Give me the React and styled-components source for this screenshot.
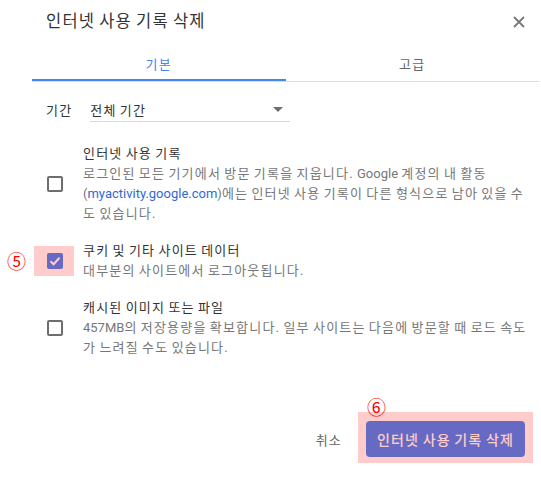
import React from "react";
import styled, { createGlobalStyle } from "styled-components";

// Hangul in Noto Sans CJK is 0.92em wide; the reference font is about a full em,
// so widen the letters and take it back off the spaces.
const Global = createGlobalStyle`
  html, body {
    margin: 0;
    padding: 0;
    background: #fff;
  }
  body {
    font-family: Roboto, "Noto Sans CJK KR", sans-serif;
    color: #333;
    letter-spacing: 0.075em;
    word-spacing: -0.075em;
  }
  button {
    letter-spacing: inherit;
    word-spacing: inherit;
  }
`;

const Latin = styled.span`
  letter-spacing: 0;
  word-spacing: 0;
`;

const Dialog = styled.div`
  width: 541px;
  height: 484px;
  box-sizing: border-box;
  display: flex;
  flex-direction: column;
`;

const Header = styled.div`
  display: flex;
  align-items: center;
  justify-content: space-between;
  padding: 10px 16px 0 46px;
  height: 24px;
`;

const Title = styled.h1`
  margin: 0;
  font-size: 16.5px;
  font-weight: 400;
  line-height: 24px;
  color: #333;
`;

const Close = styled.button`
  border: 0;
  background: none;
  padding: 0;
  width: 12px;
  height: 12px;
  display: flex;
  cursor: pointer;
`;

const Tabs = styled.div`
  display: flex;
  margin: 12px 2px 0 32px;
  border-bottom: 1px solid #dedede;
`;

const Tab = styled.div`
  flex: 1;
  height: 35px;
  display: flex;
  align-items: center;
  justify-content: center;
  font-size: 13px;
  color: ${(p) => (p.$active ? "#4285f4" : "#666")};
  box-shadow: ${(p) => (p.$active ? "inset 0 -2px 0 #4285f4" : "none")};
`;

const PeriodRow = styled.div`
  display: flex;
  align-items: center;
  margin: 15px 0 0 46px;
  gap: 18px;
  font-size: 13px;
`;

const Label = styled.span`
  color: #333;
`;

const Select = styled.div`
  width: 200px;
  height: 25px;
  border-bottom: 1px solid #dadada;
  display: flex;
  align-items: center;
  justify-content: space-between;
  padding-right: 7px;
  box-sizing: border-box;
  color: #333;
`;

const Arrow = styled.span`
  width: 0;
  height: 0;
  border-left: 5px solid transparent;
  border-right: 5px solid transparent;
  border-top: 5px solid #6e6e6e;
`;

const List = styled.div`
  display: flex;
  flex-direction: column;
  gap: 17px;
  margin-top: 22px;
`;

const Item = styled.div`
  display: flex;
  align-items: center;
  padding-left: 47px;
`;

const BoxWrap = styled.div`
  position: relative;
  width: 16px;
  height: 16px;
  flex: none;
`;

const Box = styled.div`
  width: 16px;
  height: 16px;
  box-sizing: border-box;
  border-radius: 2px;
  border: ${(p) => (p.$checked ? "none" : "2px solid #6e6e6e")};
  background: ${(p) => (p.$checked ? "#4285f4" : "transparent")};
  display: flex;
  align-items: center;
  justify-content: center;
`;

const Text = styled.div`
  margin-left: 20px;
  width: 447px;
  font-size: 13px;
  line-height: 20px;
`;

const ItemTitle = styled.div`
  color: #333;
`;

const Desc = styled.div`
  color: #777;
`;

const Link = styled.a`
  color: #3367d6;
  text-decoration: none;
`;

const Footer = styled.div`
  display: flex;
  align-items: center;
  justify-content: flex-end;
  gap: 24px;
  margin-top: 63px;
  padding-right: 16px;
`;

const Cancel = styled.button`
  border: 0;
  background: none;
  padding: 0;
  font-family: inherit;
  font-size: 13px;
  color: #666;
`;

const ButtonWrap = styled.div`
  position: relative;
`;

const Primary = styled.button`
  border: 0;
  border-radius: 4px;
  background: #4285f4;
  color: #fff;
  font-family: inherit;
  font-size: 14px;
  font-weight: 500;
  height: 36px;
  width: 159px;
  padding: 0;
`;

const Highlight = styled.div`
  position: absolute;
  left: ${(p) => p.$x}px;
  top: ${(p) => p.$y}px;
  width: ${(p) => p.$w}px;
  height: ${(p) => p.$h}px;
  background: rgba(255, 0, 0, 0.2);
  pointer-events: none;
`;

const Marker = styled.span`
  position: absolute;
  left: ${(p) => p.$x}px;
  top: ${(p) => p.$y}px;
  font-family: "Noto Sans CJK KR", sans-serif;
  font-size: 19px;
  line-height: 20px;
  letter-spacing: 0;
  color: #f00;
`;

function Check() {
  return (
    <svg width="12" height="10" viewBox="0 0 12 10">
      <path d="M1.5 5.2 L4.6 8.2 L10.5 1.8" fill="none" stroke="#fff" strokeWidth="2" />
    </svg>
  );
}

function CheckBox({ checked, mark }) {
  return (
    <BoxWrap>
      <Box $checked={checked}>{checked && <Check />}</Box>
      {mark && (
        <>
          <Highlight $x={-13} $y={-7} $w={40} $h={30} />
          <Marker $x={-40} $y={-2}>{mark}</Marker>
        </>
      )}
    </BoxWrap>
  );
}

export default function App() {
  return (
    <Dialog>
      <Global />
      <Header>
        <Title>인터넷 사용 기록 삭제</Title>
        <Close aria-label="닫기">
          <svg width="12" height="12" viewBox="0 0 12 12">
            <path d="M1 1 L11 11 M11 1 L1 11" stroke="#777" strokeWidth="1.8" />
          </svg>
        </Close>
      </Header>
      <Tabs>
        <Tab $active>기본</Tab>
        <Tab>고급</Tab>
      </Tabs>
      <PeriodRow>
        <Label>기간</Label>
        <Select>
          <span>전체 기간</span>
          <Arrow />
        </Select>
      </PeriodRow>
      <List>
        <Item>
          <CheckBox />
          <Text>
            <ItemTitle>인터넷 사용 기록</ItemTitle>
            <Desc>
              로그인된 모든 기기에서 방문 기록을 지웁니다. <Latin>Google</Latin> 계정의 내 활동{" "}
              <Latin>(</Latin><Link><Latin>myactivity.google.com</Latin></Link><Latin>)</Latin>에는 인터넷 사용 기록이
              다른 형식으로 남아 있을 수도 있습니다.
            </Desc>
          </Text>
        </Item>
        <Item>
          <CheckBox checked mark="⑤" />
          <Text>
            <ItemTitle>쿠키 및 기타 사이트 데이터</ItemTitle>
            <Desc>대부분의 사이트에서 로그아웃됩니다.</Desc>
          </Text>
        </Item>
        <Item>
          <CheckBox />
          <Text>
            <ItemTitle>캐시된 이미지 또는 파일</ItemTitle>
            <Desc>
              <Latin>457MB</Latin>의 저장용량을 확보합니다. 일부 사이트는 다음에 방문할 때 로드 속도가 느려질 수도 있습니다.
            </Desc>
          </Text>
        </Item>
      </List>
      <Footer>
        <Cancel>취소</Cancel>
        <ButtonWrap>
          <Primary>인터넷 사용 기록 삭제</Primary>
          <Highlight $x={-8} $y={-9} $w={175} $h={51} />
          <Marker $x={1} $y={-24}>⑥</Marker>
        </ButtonWrap>
      </Footer>
    </Dialog>
  );
}
